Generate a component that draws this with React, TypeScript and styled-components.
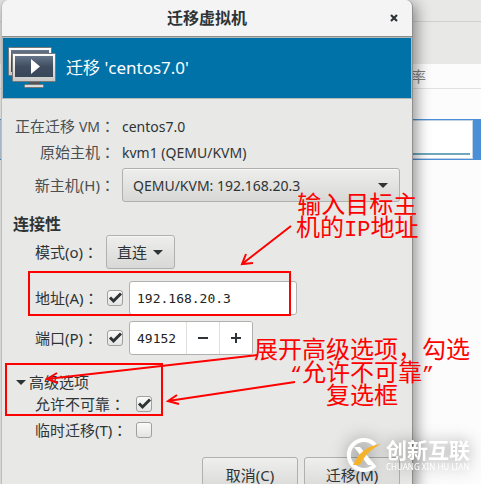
import React from 'react';
import styled, { createGlobalStyle } from 'styled-components';

const Global = createGlobalStyle`
  * { box-sizing: border-box; }
  body { margin: 0; background: #fcfcfc; }
  body, button, input, select {
    font-family: "Noto Sans", "Noto Sans CJK SC", sans-serif;
    font-size: 14px;
    font-weight: 400;
    color: #2e3436;
  }
`;

const Desktop = styled.div`
  position: relative;
  display: grid;
  height: 100vh;
  overflow: hidden;
`;

const Manager = styled.div`
  grid-area: 1 / 1;
  display: flex;
  flex-direction: column;
  min-height: 0;
  background: #fcfcfc;
`;
const ManagerBar = styled.div<{ $height: number }>`
  height: ${p => p.$height}px;
  background: #e8e8e6;
  & + & { border-top: 1px solid #d0d0ce; }
`;
const ColumnHeader = styled.div`
  display: flex;
  align-items: center;
  justify-content: flex-end;
  height: 25px;
  padding-right: 55px;
  color: #808080;
  font-size: 15px;
  line-height: 24px;
  border-bottom: 1px solid #e2e2e2;
`;
const SelectedRow = styled.div`
  display: flex;
  height: 41px;
  margin-top: 30px;
  padding: 1px 8px 1px 0;
  background: #4a90d9;
`;
const Graph = styled.div`
  flex: 1;
  display: flex;
  align-items: flex-end;
  padding: 0 2px 3px;
  background: #fff;
  border: 1px solid #c3d3e6;
  &::after { content: ""; flex: 1; height: 2px; background: #6fa8bd; }
`;

const Dialog = styled.main`
  grid-area: 1 / 1;
  align-self: start;
  z-index: 1;
  margin: 0 68px 0 1px;
  background: #e8e8e6;
  border-right: 1px solid #8f8f8f;
  border-left: 1px solid #bdbdbb;
  border-radius: 7px 7px 0 0;
  box-shadow: 3px 3px 15px rgba(0, 0, 0, 0.45);
`;
const TitleBar = styled.header`
  display: grid;
  grid-template-columns: 32px 1fr 32px;
  align-items: center;
  height: 37px;
  background: #f4f4f4;
  border-bottom: 1px solid #8d8d8a;
  border-radius: 7px 7px 0 0;
`;
const Title = styled.h1`
  grid-column: 2;
  margin: 0;
  text-align: center;
  font-size: 16px;
  font-weight: 700;
  line-height: 24px;
`;
const CloseButton = styled.button`
  display: grid;
  place-items: center;
  width: 28px;
  height: 28px;
  padding: 0;
  border: 0;
  background: none;
`;
const Banner = styled.div`
  display: flex;
  align-items: center;
  gap: 10px;
  height: 62px;
  padding: 0 5px;
  background: #0072a8;
  border: 1px solid #b3b9ba;
`;
const BannerTitle = styled.h2`
  margin: 0;
  color: #fff;
  font-size: 17px;
  font-weight: 400;
  line-height: 26px;
`;

const Body = styled.div`
  padding: 14px 12px 12px 11px;
`;
const Row = styled.div<{ $height: number; $gap?: number }>`
  display: flex;
  align-items: center;
  height: ${p => p.$height}px;
  margin-bottom: ${p => p.$gap ?? 0}px;
`;
const Caption = styled.label<{ $width: number; $align?: 'right'; $dim?: boolean }>`
  width: ${p => p.$width}px;
  flex: none;
  font-size: 15px;
  line-height: 22px;
  white-space: nowrap;
  text-align: ${p => p.$align ?? 'left'};
  color: ${p => (p.$dim ? '#4a4f50' : '#2e3436')};
`;
const Colon = styled.span`
  font-family: "Noto Sans CJK TC", sans-serif;
`;
const Key = styled.span`
  font-size: 14px;
`;
const Value = styled.output`
  margin-left: 7px;
`;
const SectionTitle = styled.h3`
  margin: 0;
  font-size: 16px;
  font-weight: 700;
  line-height: 22px;
`;
const Form = styled.div`
  padding-left: 22px;
`;
const Picker = styled.div<{ $grow?: boolean }>`
  display: grid;
  align-items: center;
  flex: ${p => (p.$grow ? 1 : 'none')};
  margin-left: ${p => (p.$grow ? 7 : 0)}px;
  & > * { grid-area: 1 / 1; }
  svg { justify-self: end; margin-right: 12px; pointer-events: none; }
`;
const Select = styled.select<{ $compact?: boolean }>`
  appearance: none;
  width: 100%;
  height: 34px;
  padding: 0 ${p => (p.$compact ? 26 : 32)}px 0 10px;
  font-size: ${p => (p.$compact ? 15 : 14)}px;
  border: 1px solid #b0b1ae;
  border-radius: 3px;
  background: linear-gradient(#eeeeec, #d8d8d6);
  box-shadow: inset 0 1px #f7f7f7;
`;
const Check = styled.input`
  appearance: none;
  flex: none;
  width: 16px;
  height: 16px;
  margin: 0;
  border: 1px solid #a0a19e;
  border-radius: 3px;
  background: linear-gradient(#fafafa, #e4e4e2);
`;
const CheckBox = styled.span`
  display: grid;
  place-items: center;
  flex: none;
  width: 16px;
  & > * { grid-area: 1 / 1; }
  svg { pointer-events: none; overflow: visible; }
`;
const Entry = styled.input`
  width: 168px;
  height: 34px;
  margin-left: 6px;
  padding: 0 7px;
  border: 1px solid #b0b1ae;
  border-radius: 3px;
  background: #fff;
  color: #222;
  font-family: "DejaVu Sans Mono", monospace;
  font-size: 13px;
`;
const Spinner = styled.div`
  display: flex;
  width: 124px;
  height: 34px;
  margin-left: 6px;
  border: 1px solid #b0b1ae;
  border-radius: 3px;
  background: #fff;
  overflow: hidden;
  ${Entry} { flex: 1; min-width: 0; height: 32px; margin: 0; border: 0; }
`;
const StepButton = styled.button`
  display: grid;
  place-items: center;
  width: 33px;
  padding: 0;
  border: 0;
  border-left: 1px solid #e0e0de;
  background: #fff;
`;
const Expander = styled.button`
  display: flex;
  align-items: center;
  gap: 3px;
  height: 22px;
  margin: 16px 0 0 3px;
  padding: 0;
  border: 0;
  background: none;
  font-size: 15px;
  line-height: 22px;
`;
const Actions = styled.footer`
  display: flex;
  justify-content: flex-end;
  gap: 6px;
  margin-top: 16px;
`;
const ActionButton = styled.button`
  width: 96px;
  height: 34px;
  border: 1px solid #b0b1ae;
  border-radius: 3px;
  background: linear-gradient(#efefed, #d8d8d6);
  font-size: 15px;
`;

const Markup = styled.div`
  position: absolute;
  inset: 0;
  z-index: 2;
  pointer-events: none;
`;
const Arrows = styled.svg`
  position: absolute;
  top: 0;
  left: 0;
`;
const Note = styled.p<{ $left: number; $top: number }>`
  position: absolute;
  left: ${p => p.$left}px;
  top: ${p => p.$top}px;
  margin: 0;
  color: #f00;
  font-family: "Noto Sans CJK SC", sans-serif;
  font-size: 24px;
  line-height: 23px;
  text-align: center;
  white-space: nowrap;
`;
const Half = styled.span<{ $size: number }>`
  font-family: "Liberation Mono", monospace;
  font-size: ${p => p.$size}px;
  line-height: 0;
`;
const Watermark = styled.div`
  position: absolute;
  left: 345px;
  top: 438px;
  display: flex;
  align-items: center;
  gap: 5px;
  color: #fff;
  filter: drop-shadow(0 0 8px rgba(0, 0, 0, 0.4));
`;
const Brand = styled.div`
  font-size: 21px;
  font-weight: 700;
  line-height: 23px;
  white-space: nowrap;
`;
const BrandLatin = styled.div`
  font-size: 8px;
  line-height: 9px;
  white-space: nowrap;
`;

const DownTriangle = () => (
  <svg width="10" height="5" viewBox="0 0 10 5"><path d="M0 0h10L5 5z" fill="#2e3436" /></svg>
);

const Tick = ({ id, label, on }: { id: string; label?: string; on?: boolean }) => (
  <CheckBox>
    <Check id={id} type="checkbox" aria-label={label} defaultChecked={on} />
    {on && (
      <svg width="12" height="10" viewBox="0 0 12 10">
        <path d="M1 4.500L4.500 8L12 0.500" fill="none" stroke="#2e3436" strokeWidth="3" />
      </svg>
    )}
  </CheckBox>
);

const Monitors = () => (
  <svg width="48" height="42" viewBox="0 0 48 42">
    <defs>
      <linearGradient id="screen" x1="0" y1="0" x2="0" y2="1">
        <stop offset="0" stopColor="#66758a" />
        <stop offset="0.5" stopColor="#404d60" />
        <stop offset="1" stopColor="#39475a" />
      </linearGradient>
      <linearGradient id="frame" x1="0" y1="0" x2="0" y2="1">
        <stop offset="0" stopColor="#fff" />
        <stop offset="1" stopColor="#c8c8c6" />
      </linearGradient>
    </defs>
    <rect x="0.5" y="0.500" width="43" height="28" rx="1" fill="url(#frame)" stroke="#777" />
    <rect x="3" y="3" width="38" height="22" fill="url(#screen)" />
    <path d="M21 34h10v4H21z" fill="#555" />
    <rect x="16.500" y="37.500" width="19" height="3" rx="1" fill="#ddd" stroke="#777" />
    <rect x="4.500" y="6.500" width="43" height="28" rx="1" fill="url(#frame)" stroke="#777" />
    <rect x="7" y="9" width="38" height="21" fill="url(#screen)" />
    <path d="M23 12l9 7.500l-9 7.500z" fill="#fff" />
  </svg>
);

export default function App() {
  return (
    <>
      <Global />
      <Desktop>
        <Manager>
          <ManagerBar $height={21} />
          <ManagerBar $height={43} />
          <ColumnHeader>率</ColumnHeader>
          <SelectedRow><Graph /></SelectedRow>
        </Manager>

        <Dialog>
          <TitleBar>
            <Title>迁移虚拟机</Title>
            <CloseButton aria-label="关闭">
              <svg width="8" height="8" viewBox="0 0 8 8"><path d="M1 1l6 6M7 1L1 7" stroke="#2e3436" strokeWidth="2.200" /></svg>
            </CloseButton>
          </TitleBar>
          <Banner>
            <Monitors />
            <BannerTitle>迁移 'centos7.0'</BannerTitle>
          </Banner>
          <Body>
            <Row $height={26}>
              <Caption as="span" $width={102} $align="right" $dim>正在迁移 <Key>VM</Key><Colon>：</Colon></Caption>
              <Value>centos7.0</Value>
            </Row>
            <Row $height={26} $gap={3}>
              <Caption as="span" $width={102} $align="right" $dim>原始主机<Colon>：</Colon></Caption>
              <Value>kvm1 (QEMU/KVM)</Value>
            </Row>
            <Row $height={34} $gap={11}>
              <Caption htmlFor="host" $width={102} $align="right" $dim>新主机(H)<Colon>：</Colon></Caption>
              <Picker $grow>
                <Select id="host"><option>QEMU/KVM: 192.168.20.3</option></Select>
                <DownTriangle />
              </Picker>
            </Row>
            <SectionTitle>连接性</SectionTitle>
            <Form>
              <Row $height={34} $gap={12}>
                <Caption htmlFor="mode" $width={71}>模式(o)<Colon>：</Colon></Caption>
                <Picker>
                  <Select id="mode" $compact><option>直连</option></Select>
                  <DownTriangle />
                </Picker>
              </Row>
              <Row $height={34} $gap={6}>
                <Caption htmlFor="address" $width={72}>地址(A)<Colon>：</Colon></Caption>
                <Tick id="use-address" label="地址" on />
                <Entry id="address" defaultValue="192.168.20.3" />
              </Row>
              <Row $height={34}>
                <Caption htmlFor="port" $width={72}>端口(P)<Colon>：</Colon></Caption>
                <Tick id="use-port" label="端口" on />
                <Spinner>
                  <Entry id="port" defaultValue="49152" />
                  <StepButton aria-label="减少"><svg width="10" height="10"><path d="M0 5h10" stroke="#2e3436" strokeWidth="2" /></svg></StepButton>
                  <StepButton aria-label="增加"><svg width="10" height="10"><path d="M0 5h10M5 0v10" stroke="#2e3436" strokeWidth="2" /></svg></StepButton>
                </Spinner>
              </Row>
            </Form>
            <Expander aria-expanded="true"><DownTriangle />高级选项</Expander>
            <Form>
              <Row $height={22} $gap={4}>
                <Caption htmlFor="unsafe" $width={101}>允许不可靠<Colon>：</Colon></Caption>
                <Tick id="unsafe" on />
              </Row>
              <Row $height={22}>
                <Caption htmlFor="temporary" $width={101}>临时迁移(T)<Colon>：</Colon></Caption>
                <Tick id="temporary" />
              </Row>
            </Form>
            <Actions>
              <ActionButton>取消(C)</ActionButton>
              <ActionButton>迁移(M)</ActionButton>
            </Actions>
          </Body>
        </Dialog>

        <Markup>
          <Arrows width="481" height="484" viewBox="0 0 481 484" fill="none" stroke="#f00" strokeWidth="2">
            <rect x="29" y="272" width="261" height="43" />
            <rect x="6" y="364" width="156" height="51" />
            <path d="M291 226L242 264M246 254L242 264L253 263" />
            <path d="M258 355L47 379M57 373L47 379L58 383" />
            <path d="M295 382L168 401M177 395L168 401L179 404" />
          </Arrows>
          <Note $left={296} $top={191}>输入目标主<br />机的<Half $size={22}>IP</Half>地址</Note>
          <Note $left={254} $top={336}>展开高级选项，勾选<br /><Half $size={20}>“</Half>允许不可靠<Half $size={20}>”</Half><br />复选框</Note>
          <Watermark>
            <svg width="36" height="34" viewBox="0 0 36 34">
              <path d="M30 7A15 15 0 1 0 30 27" fill="none" stroke="#fff" strokeWidth="4" />
              <path d="M9 9h6l15 18h-7z" fill="#fff" />
              <path d="M8 27C14 14 22 8 36 6C26 11 20 17 15 27z" fill="#f5b32b" />
            </svg>
            <div>
              <Brand>创新互联</Brand>
              <BrandLatin>CHUANG XIN HU LIAN</BrandLatin>
            </div>
          </Watermark>
        </Markup>
      </Desktop>
    </>
  );
}
